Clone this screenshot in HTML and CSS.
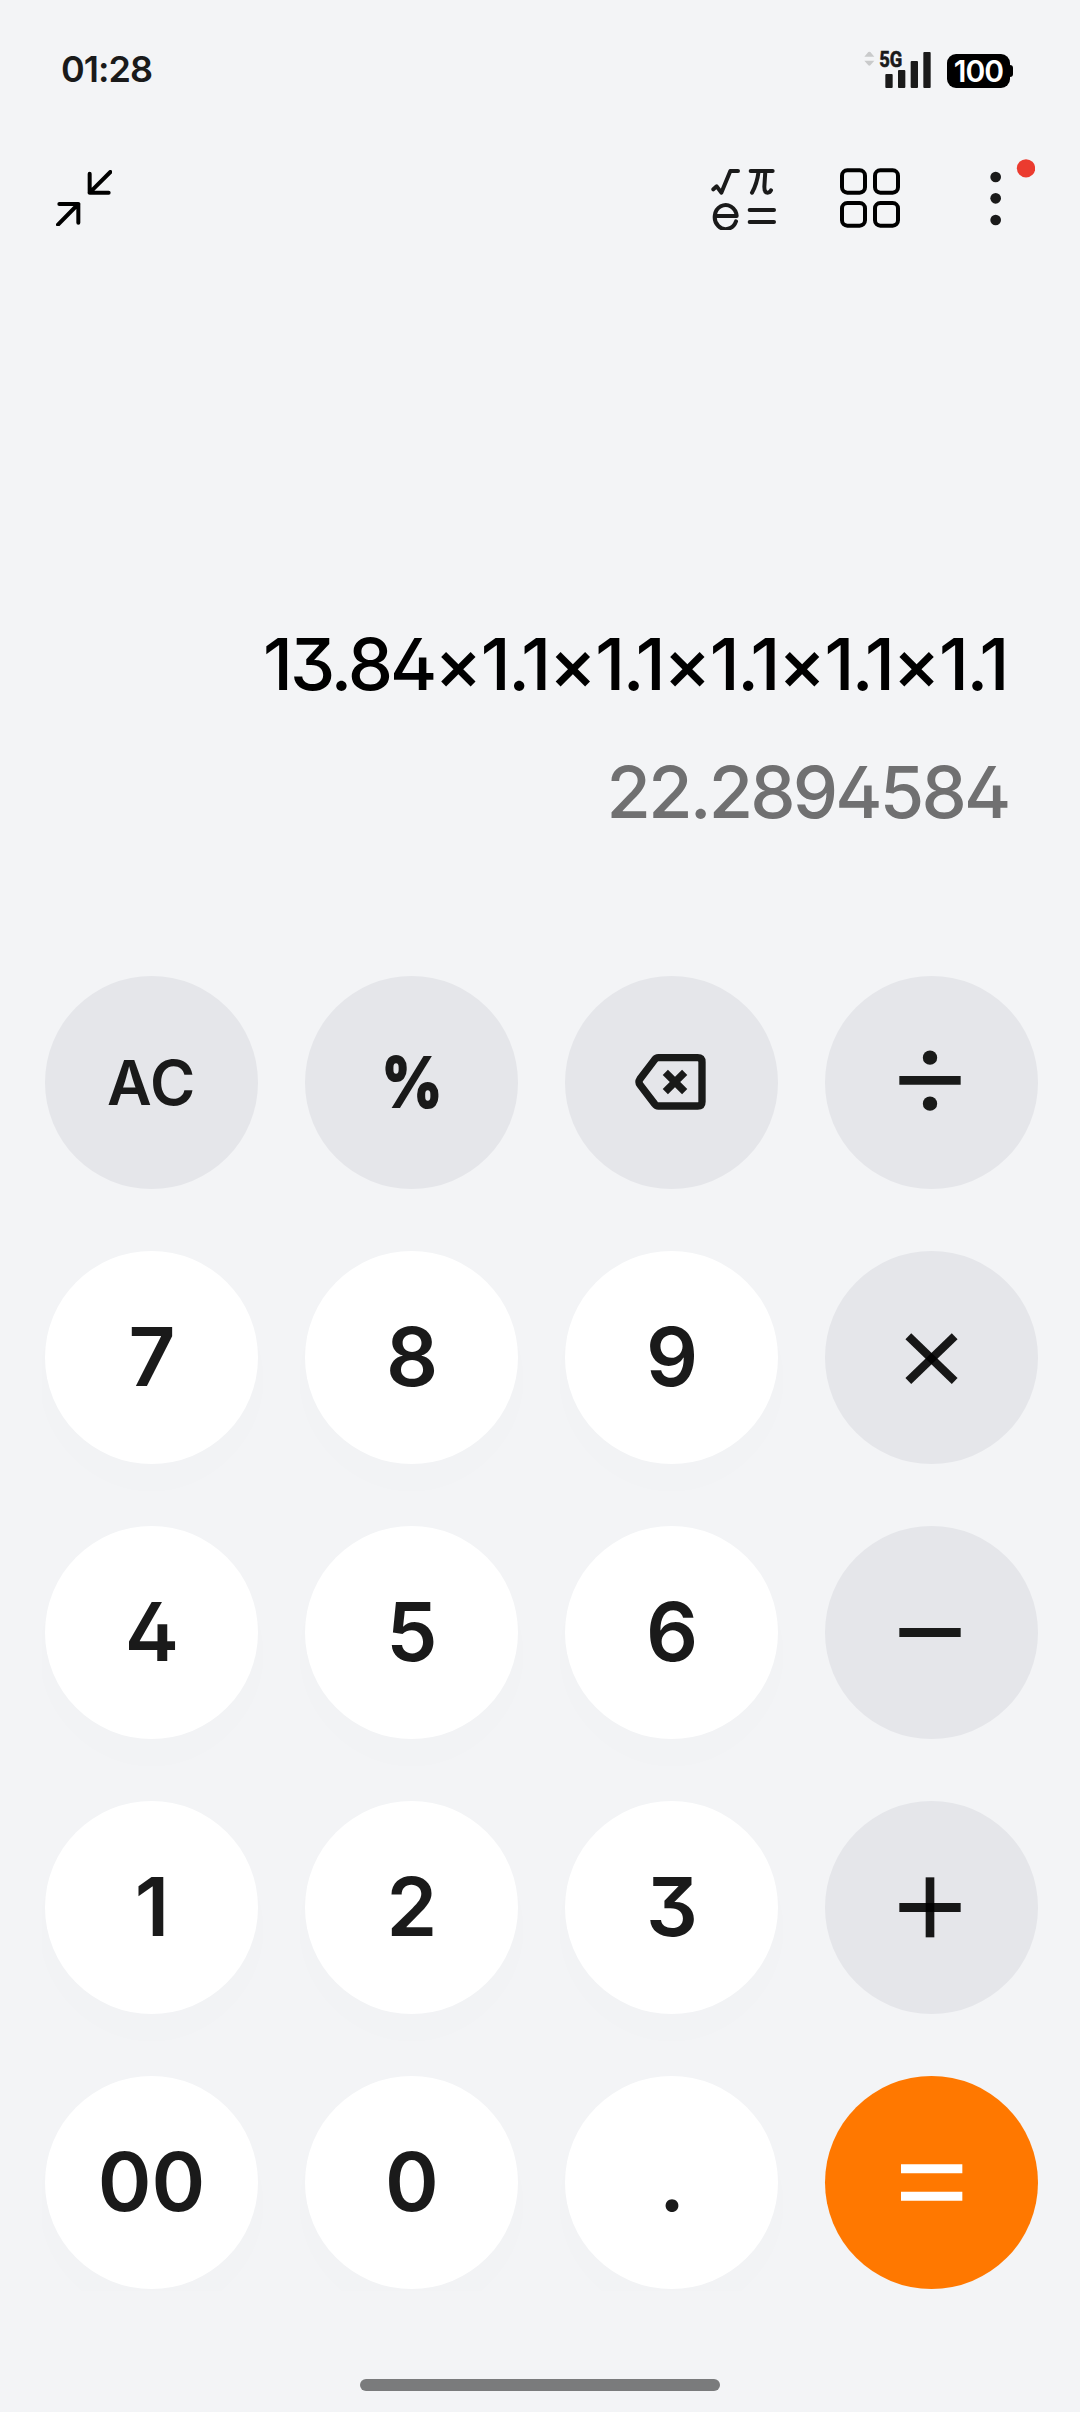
FILE: index.html
```html
<!DOCTYPE html>
<html lang="en">
<head>
<meta charset="utf-8">
<title>Calculator</title>
<link rel="stylesheet" href="styles.css">
</head>
<body>
<div class="screen">
  <header class="status">
    <span class="clock">01:28</span>
    <div class="indicators">
      <svg class="signal" viewBox="0 0 201 114" aria-label="5G signal">
        <path fill="#c9cacb" d="M1 20L13 6q3-2 6 0L31 20ZM1 32H31L19 46q-3 2-6 0Z"/>
        <text x="46" y="51" textLength="69" lengthAdjust="spacingAndGlyphs" class="net">5G</text>
        <g fill="#1a1a1a"><rect x="64" y="72" width="22" height="42" rx="3"/><rect x="102" y="60" width="22" height="54" rx="3"/><rect x="140" y="33" width="22" height="81" rx="3"/><rect x="178" y="6" width="22" height="108" rx="3"/></g>
      </svg>
      <div class="battery">100</div>
    </div>
  </header>

  <nav class="toolbar">
    <svg class="collapse" viewBox="0 0 168 168" fill="none" stroke="#000" stroke-width="12" stroke-linecap="round" stroke-linejoin="round">
      <path d="M163 6L101 68M101 11V68H158M6 164L67 102M10 102H67V158"/>
    </svg>
    <div class="actions">
      <svg class="formula" viewBox="0 0 195 186" fill="none" stroke="#1a1a1a" stroke-width="12" stroke-linecap="round" stroke-linejoin="round">
        <path d="M7 64L17 55L31 74L58 9H81"/>
        <path d="M119 9H185M143 9Q138 48 123 74M163 9L160 56Q160 74 170 74Q177 74 180 67"/>
        <path d="M12 144H77A33 36 0 1 0 75 160"/>
        <path d="M116 126H189M116 162H189"/>
      </svg>
      <svg class="grid" viewBox="0 0 180 180" fill="none" stroke="#000" stroke-width="12">
        <rect x="6" y="7" width="69" height="67" rx="16"/><rect x="105" y="7" width="69" height="67" rx="16"/><rect x="6" y="105" width="69" height="68" rx="16"/><rect x="105" y="105" width="69" height="68" rx="16"/>
      </svg>
      <svg class="more" viewBox="0 0 135 201">
        <g fill="#1a1a1a"><circle cx="17" cy="54" r="16"/><circle cx="17" cy="118" r="16"/><circle cx="17" cy="183" r="16"/></g>
        <circle cx="108" cy="28" r="27.5" fill="#eb3b2f"/>
      </svg>
    </div>
  </nav>

  <main class="display">
    <div class="expression"><b>13.84</b><i>×</i>1.1<i>×</i>1.1<i>×</i>1.1<i>×</i>1.1<i>×</i>1.1</div>
    <div class="result">22.2894584</div>
  </main>

  <section class="keypad">
    <button class="key fn ac">AC</button>
    <button class="key fn pct"><span>%</span></button>
    <button class="key fn" aria-label="Delete"><svg viewBox="0 0 639 639" fill="none" stroke="#191a19" stroke-width="22"><path d="M280 245H398Q411 245 411 258V377Q411 390 398 390H280Q273 390 269 384L225 326Q219 318 225 309L269 251Q273 245 280 245Z"/><path d="M301 289L359 347M359 289L301 347"/></svg></button>
    <button class="key fn" aria-label="Divide"><svg viewBox="0 0 639 639" fill="#191a19"><path d="M223 300H407V326H223Z"/><circle cx="315" cy="245" r="21.5"/><circle cx="315" cy="383" r="21.5"/></svg></button>

    <button class="key">7</button>
    <button class="key">8</button>
    <button class="key">9</button>
    <button class="key fn" aria-label="Multiply"><svg viewBox="0 0 639 639" stroke="#000" stroke-opacity=".9" stroke-width="25"><path d="M250 256L389 390"/><path d="M389 256L250 390"/></svg></button>

    <button class="key">4</button>
    <button class="key">5</button>
    <button class="key">6</button>
    <button class="key fn" aria-label="Subtract"><svg viewBox="0 0 639 639" fill="#191a19"><path d="M223 306H407V333H223Z"/></svg></button>

    <button class="key">1</button>
    <button class="key">2</button>
    <button class="key">3</button>
    <button class="key fn" aria-label="Add"><svg viewBox="0 0 639 639" fill="#000" fill-opacity=".9"><path d="M223 306H407V333H223Z"/><path d="M302 229H328V409H302Z"/></svg></button>

    <button class="key zeros">00</button>
    <button class="key">0</button>
    <button class="key">.</button>
    <button class="key equals" aria-label="Equals"><svg viewBox="0 0 639 639" fill="#fff"><path d="M228 265H412V292H228ZM228 347H412V374H228Z"/></svg></button>
  </section>

  <div class="home-bar"></div>
</div>
</body>
</html>
```
FILE: styles.css
```css
* { box-sizing: border-box; }

body {
  margin: 0;
  background: #f3f4f6;
  font-family: Inter, "Open Sans", sans-serif;
  font-feature-settings: "cv02", "cv09", "kern";
}

svg { display: block; }

.screen {
  width: 1080px;
  height: 2412px;
  display: flex;
  flex-direction: column;
  overflow: hidden;
}

.status {
  height: 140px;
  padding: 49px 70px 0 61px;
  display: flex;
  justify-content: space-between;
  align-items: flex-start;
}

.clock {
  font-size: 36px;
  font-weight: 600;
  line-height: 40px;
  letter-spacing: -1px;
  color: #1a1a1a;
}

.indicators {
  display: flex;
  align-items: flex-end;
  gap: 16px;
  margin-top: 1px;
}

.signal { width: 67px; height: 38px; overflow: visible; }

.net {
  font: 700 65px Roboto, sans-serif;
  fill: #1a1a1a;
  stroke: #1a1a1a;
  stroke-width: 2px;
}

.battery {
  position: relative;
  width: 63px;
  height: 34px;
  border-radius: 9px;
  background: #000;
  color: #fff;
  font-size: 30px;
  font-weight: 600;
  line-height: 35px;
  text-align: center;
  letter-spacing: -1px;
}

.battery::after {
  content: "";
  position: absolute;
  left: 63px;
  top: 11px;
  width: 3px;
  height: 12px;
  border-radius: 0 3px 3px 0;
  background: #000;
}

.toolbar {
  height: 110px;
  padding: 18px 45px 0 56px;
  display: flex;
  justify-content: space-between;
  align-items: flex-start;
}

.collapse { width: 56px; height: 56px; margin-top: 12px; }

.actions { display: flex; padding-top: 1px; }

.formula { width: 65px; height: 62px; margin: 9px 64px 0 0; }
.grid { width: 60px; height: 60px; margin: 9px 90px 0 0; }
.more { width: 45px; height: 67px; }

.display {
  height: 726px;
  padding: 360px 73px 0 0;
  text-align: right;
  font-size: 72px;
  font-weight: 500;
}

.expression {
  height: 128px;
  line-height: 108px;
  color: #000;
  letter-spacing: -2.4px;
}

.expression b {
  font-weight: inherit;
  letter-spacing: -3px;
}

.expression i {
  font-style: normal;
  letter-spacing: -1.6px;
}

.result {
  margin-right: -1.5px;
  line-height: 108px;
  color: #707071;
  letter-spacing: -2.8px;
}

.keypad {
  height: 1318px;
  padding: 3px;
  margin: -3px 39px 0 42px;
  display: grid;
  grid-template-columns: repeat(4, 213px);
  grid-auto-rows: 213px;
  gap: 62px 47px;
  overflow: hidden;
  flex-shrink: 0;
}

.key {
  border: 0;
  border-radius: 50%;
  padding: 0 0 2px 1px;
  display: flex;
  align-items: center;
  justify-content: center;
  background: #fff;
  box-shadow: 0 22px 8px 16px rgba(0, 0, 0, 0.004);
  color: #1a1a1a;
  font-family: inherit;
  font-feature-settings: inherit;
  font-size: 81.5px;
  font-weight: 600;
  line-height: 100px;
}

.key svg { width: 213px; height: 213px; flex: none; }
.key:has(svg) { padding: 0; }

.fn { background: #e5e6ea; box-shadow: none; }
.zeros { padding-left: 0; }
.ac { font-size: 61.5px; padding: 0; letter-spacing: 0.8px; }
.pct { font-size: 69px; font-weight: 700; }
.pct span { transform: scaleX(0.89); -webkit-text-stroke: 2px #1a1a1a; }
.equals { background: #ff7800; box-shadow: none; }

.home-bar {
  width: 360px;
  height: 12px;
  margin: 88px auto 0;
  border-radius: 6px;
  background: #7a7b7c;
}
```
